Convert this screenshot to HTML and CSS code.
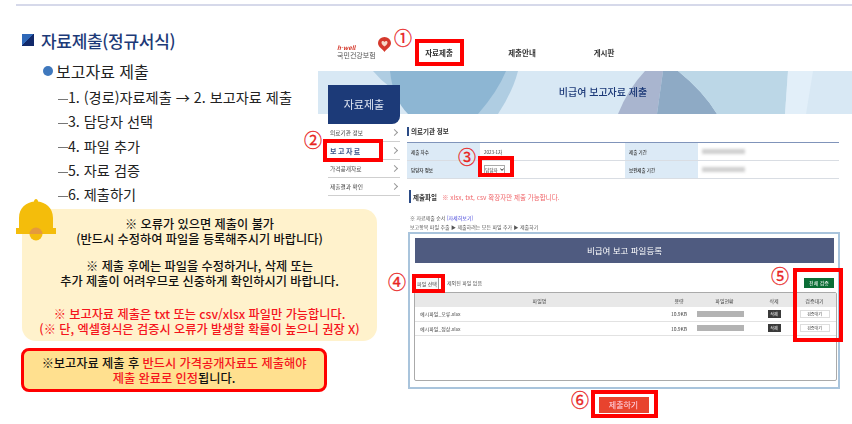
FILE: index.html
```html
<!DOCTYPE html>
<html lang="ko">
  <head>
    <meta charset="utf-8" />
    <title>자료제출(정규서식)</title>
    <link rel="stylesheet" href="styles.css">
  </head>
  <body>
    <div class="page">
      <div class="topline"></div>
      <div class="cols">

        <!--left: guide text-->
        <div class="guide">
          <h1 class="title"><span class="square"></span>자료제출(정규서식)</h1>
          <div class="sub"><span class="dot"></span>보고자료 제출</div>
          <ul class="steps">
            <li>1. (경로)자료제출 → 2. 보고자료 제출</li>
            <li>3. 담당자 선택</li>
            <li>4. 파일 추가</li>
            <li>5. 자료 검증</li>
            <li>6. 제출하기</li>
          </ul>
          <div class="notice">
            <p>※ 오류가 있으면 제출이 불가<br>(반드시 수정하여 파일을 등록해주시기 바랍니다)</p>
            <p>※ 제출 후에는 파일을 수정하거나, 삭제 또는<br>추가 제출이 어려우므로 신중하게 확인하시기 바랍니다.</p>
            <p class="red">※ 보고자료 제출은 txt 또는 csv/xlsx 파일만 가능합니다.<br>(※ 단, 엑셀형식은 검증시 오류가 발생할 확률이 높으니 권장 X)</p>
          </div>
          <div class="warn">
            ※보고자료 제출 후 <span class="red">반드시 가격공개자료도 제출해야</span><br>
            <span class="red">제출 완료로 인정</span>됩니다.
          </div>
        </div>

        <!--right: site capture-->
        <div class="site">
          <div class="nav">
            <div class="logo">
              <span class="logo-top">h-well</span>
              <span class="logo-name">국민건강보험</span>
            </div>
            <svg class="pin" width="13" height="15" viewBox="0 0 13 15">
              <path d="M6.5 15 C5 12.5 0 10 0 6 A6.5 6 0 0 1 13 6 C13 10 8 12.5 6.5 15Z" fill="#d5392c"/>
              <path d="M6.5 9.5 C4.5 8 3.5 7 3.5 5.5 C3.5 4 5.5 3.5 6.5 5 C7.5 3.5 9.5 4 9.5 5.5 C9.5 7 8.5 8 6.5 9.5Z" fill="#f6d9c8"/>
            </svg>
            <div class="nav-item nav-1">자료제출</div>
            <div class="nav-item nav-2">제출안내</div>
            <div class="nav-item nav-3">게시판</div>
          </div>

          <div class="hero">
            <svg class="hero-bg" width="534" height="43" viewBox="0 0 534 43">
              <rect width="534" height="43" fill="#d8e8f4"/>
              <path d="M55 0 Q85 36 150 43 L180 43 Q195 20 200 0Z" fill="#afcde2"/>
              <path d="M72 0 Q75 28 90 43 L160 43 Q180 20 188 0Z" fill="#8db6d3"/>
              <path d="M300 43 Q310 18 327 0 L345 0 L339 43Z" fill="#a9b5cf"/>
              <path d="M339 43 L345 0 L360 0 Q385 20 399 43Z" fill="#8eaac5"/>
              <path d="M360 0 L470 0 L467 43 L399 43 Q385 20 360 0Z" fill="#bcd7e7"/>
              <path d="M470 0 L495 0 L488 43 L467 43Z" fill="#e2eff9"/>
            </svg>
            <div class="hero-title">비급여 보고자료 제출</div>
          </div>

          <div class="body">
            <div class="side">
              <div class="side-head">자료제출</div>
              <div class="side-row">의료기관 정보<span class="chev"></span></div>
              <div class="side-row on">보고자료<span class="chev"></span></div>
              <div class="side-row">가격공개자료<span class="chev"></span></div>
              <div class="side-row">제출결과 확인<span class="chev"></span></div>
            </div>

            <div class="main">
              <h2 class="sec">의료기관 정보</h2>
              <table class="info">
                <colgroup><col class="c1"><col class="c2"><col class="c3"><col class="c4"></colgroup>
                <tr>
                  <th>제출 차수</th><td>2023-1차</td>
                  <th>제출 기간</th><td><span class="blurred"></span></td>
                </tr>
                <tr>
                  <th>담당자 정보</th>
                  <td>
                    <span class="picker">담당자
                      <svg width="4" height="3" viewBox="0 0 4 3"><path d="M0.3 0.5 L2 2.4 L3.7 0.5" fill="none" stroke="#111" stroke-width="0.9"/></svg>
                    </span>
                  </td>
                  <th>보완제출 기간</th><td><span class="blurred"></span></td>
                </tr>
              </table>

              <div class="sec2">
                <h2>제출파일</h2>
                <span class="sec2-note">※ xlsx, txt, csv 확장자만 제출 가능합니다.</span>
              </div>
              <div class="how first">※ 자료제출 순서 <span class="link">[자세히보기]</span></div>
              <div class="how">보고항목 파일 추출 ▶ 제출하려는 모든 파일 추가 ▶ 제출하기</div>

              <div class="panel">
                <div class="panel-head">비급여 보고 파일등록</div>
                <div class="tools">
                  <span class="file-btn">파일 선택</span>
                  <span class="file-none">제외된 파일 없음</span>
                  <span class="verify-all">전체 검증</span>
                </div>
                <div class="files-wrap">
                  <table class="files">
                    <colgroup><col class="f1"><col class="f2"><col class="f3"><col class="f4"><col class="f5"></colgroup>
                    <tr>
                      <th>파일명</th><th>용량</th><th>파일현황</th><th>삭제</th><th>검증대기</th>
                    </tr>
                    <tr>
                      <td class="name">예시파일_오류.xlsx</td><td>10.9KB</td>
                      <td><span class="bar"></span></td>
                      <td><span class="del">삭제</span></td>
                      <td><span class="wait">검증대기</span></td>
                    </tr>
                    <tr>
                      <td class="name">예시파일_정상.xlsx</td><td>10.9KB</td>
                      <td><span class="bar"></span></td>
                      <td><span class="del">삭제</span></td>
                      <td><span class="wait">검증대기</span></td>
                    </tr>
                  </table>
                </div>
              </div>
              <div class="submit-row"><span class="submit">제출하기</span></div>
            </div>
          </div>
        </div>
      </div>

      <!--bell over the notice-->
      <svg class="bell" width="40" height="42" viewBox="0 0 40 42">
        <path d="M20 0 C21 0 22 1 22 2.5 C29 3.5 37 8 37 19 L37 30 L3 30 L3 19 C3 8 11 3.5 18 2.5 C18 1 19 0 20 0Z" fill="#f4bd0b"/>
        <rect x="0" y="29" width="40" height="6" fill="#f4bd0b"/>
        <circle cx="20" cy="35" r="6.5" fill="#f4bd0b"/>
        <path d="M13.5 35 A6.5 6.5 0 0 1 26.5 35Z" fill="#e59a3c"/>
      </svg>

      <!--red guide marks on top of the capture-->
      <span class="box box-1"></span>
      <span class="box box-2"></span>
      <span class="box box-3"></span>
      <span class="box box-4"></span>
      <span class="box box-5"></span>
      <span class="box box-6"></span>
      <span class="num num-1">①</span>
      <span class="num num-2">②</span>
      <span class="num num-3">③</span>
      <span class="num num-4">④</span>
      <span class="num num-5">⑤</span>
      <span class="num num-6">⑥</span>
    </div>
  </body>
</html>
```

FILE: styles.css
```css
* {
  padding: 0;
  margin: 0;
  box-sizing: border-box;
}
body {
  background-color: white;
  font-family: "Noto Sans CJK KR", "Noto Sans", sans-serif;
  color: #222;
}
.page {
  position: relative;
  width: 852px;
  height: 424px;
  overflow: hidden;
}
.topline {
  height: 2px;
  margin: 4px 0 0 16px;
  background-color: #d6d9ea;
}
.cols {
  display: flex;
}
.red {
  color: #f5141c;
}

/*left*/
.guide {
  width: 318px;
  flex: none;
}
.title {
  display: flex;
  align-items: center;
  gap: 7px;
  margin: 21px 0 0 22px;
  height: 26px;
  font-size: 17px;
  font-weight: 500;
  color: #1d3a78;
  letter-spacing: -0.3px;
}
.square {
  width: 12px;
  height: 12px;
  background: linear-gradient(135deg, #2f68b8 50%, #12296a 50%);
}
.sub {
  display: flex;
  align-items: center;
  gap: 3px;
  margin: 6px 0 0 43px;
  height: 24px;
  font-size: 16px;
  color: #222;
}
.dot {
  width: 10px;
  height: 10px;
  border-radius: 50%;
  background-color: #3f78bd;
}
.steps {
  list-style: none;
  margin: 2px 0 0 58px;
  font-size: 14.2px;
  line-height: 24.3px;
  white-space: nowrap;
}
.steps li::before {
  content: "";
  display: inline-block;
  width: 10px;
  height: 1px;
  vertical-align: middle;
  background-color: #777;
}
.notice {
  width: 355px;
  height: 132px;
  margin: 3px 0 0 22px;
  padding: 8px 0 0;
  background-color: #fff2cc;
  border-radius: 14px;
  text-align: center;
  font-size: 12.2px;
  font-weight: 500;
  line-height: 15px;
  white-space: nowrap;
  color: #111;
}
.notice p {
  margin-bottom: 12px;
}
.notice p.red {
  margin-top: 18px;
  color: #f5141c;
}
.warn {
  width: 306px;
  height: 44px;
  margin: 7px 0 0 21px;
  padding-top: 5px;
  background-color: #ffe08f;
  border: 3px solid #f00;
  border-radius: 8px;
  text-align: center;
  font-size: 12.2px;
  font-weight: 500;
  line-height: 15px;
  white-space: nowrap;
  color: #111;
}

/*right*/
.site {
  width: 534px;
  flex: none;
  filter: blur(0.3px);
}
.nav {
  display: flex;
  align-items: center;
  height: 65px;
  padding-top: 28px;
}
.logo {
  display: flex;
  flex-direction: column;
  margin: -3px 0 0 19px;
  width: 40px;
  flex: none;
  line-height: 7px;
}
.logo-top {
  font-size: 6px;
  font-style: italic;
  font-weight: 700;
  color: #d5392c;
}
.logo-name {
  font-size: 7px;
  line-height: 8px;
  color: #555;
  white-space: nowrap;
}
.pin {
  flex: none;
  margin: -16px 0 0 1px;
}
.nav-item {
  font-size: 7.5px;
  font-weight: 700;
  color: #333;
  text-align: center;
}
.nav-1 {
  margin-left: 28px;
  width: 40px;
}
.nav-2 {
  margin-left: 43px;
  width: 40px;
}
.nav-3 {
  margin-left: 42px;
  width: 40px;
}
.hero {
  position: relative;
  display: flex;
  align-items: center;
  justify-content: center;
  height: 43px;
}
.hero-bg {
  position: absolute;
  left: 0;
  top: 0;
}
.hero-title {
  position: relative;
  margin: 0 0 2px 36px;
  font-size: 10px;
  font-weight: 500;
  color: #1d3a78;
}
.body {
  display: flex;
}
.side {
  position: relative;
  width: 72px;
  flex: none;
  margin: -29px 0 0 10px;
}
.side-head {
  height: 39px;
  background-color: #1c3a78;
  border-bottom-right-radius: 8px;
  color: #dfe6f2;
  font-size: 11px;
  line-height: 39px;
  text-align: center;
}
.side-row {
  display: flex;
  justify-content: space-between;
  align-items: center;
  height: 18px;
  padding: 0 3px 0 2px;
  border-bottom: 1px solid #cfcfcf;
  font-size: 5.7px;
  color: #444;
}
.side-row.on {
  font-size: 7px;
  font-weight: 700;
  color: #3a5488;
  letter-spacing: 1.5px;
}
.chev {
  width: 5px;
  height: 5px;
  border-top: 1px solid #999;
  border-right: 1px solid #999;
  transform: rotate(45deg);
}
.main {
  width: 433px;
  flex: none;
  margin-left: 7px;
}
.sec {
  height: 28px;
  padding: 9px 0 0 4px;
  font-size: 6.5px;
  line-height: 16px;
  font-weight: 700;
  color: #333;
  background: linear-gradient(#2b4b86, #2b4b86) no-repeat 0 13px / 2px 9px;
}
.info {
  width: 432px;
  table-layout: fixed;
  border-collapse: collapse;
  border-top: 1px solid #8094ba;
}
.c1 {
  width: 73px;
}
.c3 {
  width: 73px;
}
.c2 {
  width: 145px;
}
.info th,
.info td {
  height: 18px;
  border-bottom: 1px solid #d9dde3;
  font-size: 4.5px;
  text-align: left;
  padding-left: 4px;
  color: #333;
}
.info th {
  background-color: #dceaf6;
  font-weight: 500;
}
.blurred {
  display: block;
  width: 43px;
  height: 5px;
  background-color: #cfcfcf;
  filter: blur(1.5px);
}
.picker {
  display: flex;
  align-items: center;
  justify-content: center;
  gap: 2px;
  height: 9px;
  width: 21px;
  border: 1px solid #aaa;
  font-size: 4.5px;
}
.sec2 {
  display: flex;
  align-items: center;
  gap: 5px;
  height: 13px;
  margin: 11px 0 0 2px;
  padding-left: 2px;
  border-left: 2px solid #2b4b86;
}
.sec2 h2 {
  font-size: 6.5px;
  font-weight: 700;
  color: #333;
}
.sec2-note {
  font-size: 6.5px;
  color: #f0666a;
}
.how {
  height: 9px;
  padding-left: 3px;
  font-size: 5px;
  line-height: 9px;
  color: #555;
  white-space: nowrap;
}
.how.first {
  margin-top: 10px;
}
.link {
  color: #3c3cd8;
}
.panel {
  width: 432px;
  height: 157px;
  margin: 1px 0 0 1px;
  padding: 4px 4px 0 5px;
  border: 2px solid #a9c4dc;
}
.panel-head {
  height: 25px;
  background-color: #4f5b80;
  color: white;
  font-size: 8.5px;
  line-height: 25px;
  text-align: center;
}
.tools {
  display: flex;
  align-items: flex-start;
  gap: 8px;
  height: 29px;
  font-size: 5px;
}
.file-btn {
  height: 13px;
  width: 24px;
  margin-top: 14px;
  border: 1px solid #999;
  background-color: #fafafa;
  line-height: 11px;
  text-align: center;
  color: #444;
}
.file-none {
  margin-top: 16px;
  color: #555;
}
.verify-all {
  width: 30px;
  height: 10px;
  margin: 15px 0 0 auto;
  background-color: #0b6e36;
  color: white;
  line-height: 10px;
  text-align: center;
}
.files-wrap {
  width: 423px;
  height: 89px;
  margin-left: -1px;
  border: 1px solid #aaa;
  border-radius: 2px;
}
.files {
  width: 100%;
  table-layout: fixed;
  border-collapse: collapse;
  font-size: 5px;
  color: #444;
}
.f2 {
  width: 30px;
}
.f3 {
  width: 61px;
}
.f4 {
  width: 38px;
}
.f5 {
  width: 43px;
}
.files th {
  height: 14px;
  background-color: #e8e8e8;
  font-weight: 400;
}
.files td {
  height: 14px;
  border-bottom: 1px solid #e2e2e2;
  text-align: center;
}
.files td.name {
  text-align: left;
  padding-left: 5px;
}
.bar {
  display: block;
  width: 47px;
  height: 6px;
  margin: 0 0 0 3px;
  background-color: #b3b3b3;
}
.del {
  display: inline-block;
  width: 13px;
  height: 8px;
  background-color: #3a3a3a;
  color: white;
  font-size: 4px;
  line-height: 8px;
}
.wait {
  display: inline-block;
  width: 30px;
  height: 8px;
  border: 1px solid #ddd;
  font-size: 4px;
  line-height: 6px;
}
.submit-row {
  display: flex;
  justify-content: center;
  padding-top: 8px;
  width: 433px;
}
.submit {
  width: 50px;
  height: 16px;
  background-color: #e8432e;
  color: #fde;
  font-size: 8px;
  line-height: 16px;
  text-align: center;
}

/*overlay*/
.bell {
  position: absolute;
  left: 16px;
  top: 199px;
}
.box {
  position: absolute;
  border: 4px solid #f00;
}
.box-1 {
  left: 415px;
  top: 39px;
  width: 49px;
  height: 27px;
}
.box-2 {
  left: 323px;
  top: 139px;
  width: 60px;
  height: 23px;
}
.box-3 {
  left: 478px;
  top: 156px;
  width: 36px;
  height: 21px;
}
.box-4 {
  left: 412px;
  top: 274px;
  width: 33px;
  height: 19px;
}
.box-5 {
  left: 793px;
  top: 268px;
  width: 50px;
  height: 74px;
}
.box-6 {
  left: 591px;
  top: 390px;
  width: 67px;
  height: 28px;
}
.num {
  position: absolute;
  width: 18px;
  height: 18px;
  text-align: center;
  font-size: 18px;
  line-height: 18px;
  color: #e8251f;
  -webkit-text-stroke: 0.3px #e8251f;
}
.num-1 {
  left: 394px;
  top: 28px;
}
.num-2 {
  left: 304px;
  top: 130px;
}
.num-3 {
  left: 458px;
  top: 147px;
}
.num-4 {
  left: 388px;
  top: 272px;
}
.num-5 {
  left: 771px;
  top: 266px;
}
.num-6 {
  left: 571px;
  top: 390px;
}
```
